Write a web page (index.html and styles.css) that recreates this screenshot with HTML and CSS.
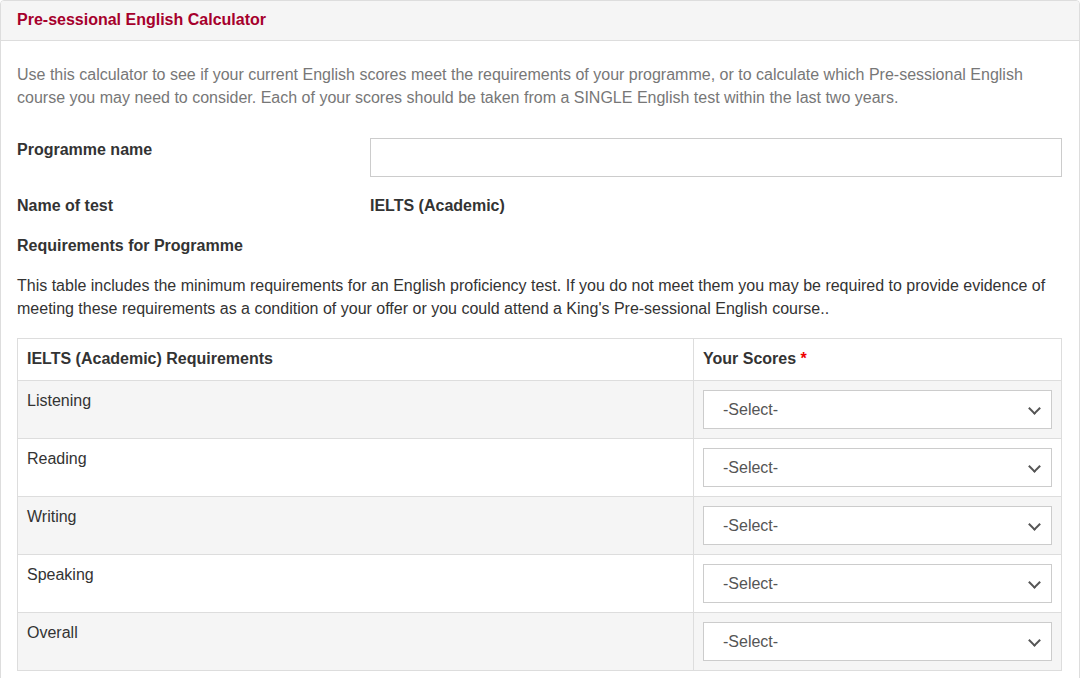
FILE: index.html
```html
<!DOCTYPE html>
<html lang="en">
<head>
<meta charset="utf-8">
<title>Pre-sessional English Calculator</title>
<link rel="stylesheet" href="styles.css">
</head>
<body>
<div class="panel">
  <div class="panel-heading">Pre-sessional English Calculator</div>
  <div class="panel-body">
    <p class="intro">Use this calculator to see if your current English scores meet the requirements of your programme, or to calculate which Pre-sessional English course you may need to consider. Each of your scores should be taken from a SINGLE English test within the last two years.</p>
    <div class="field-row field-input">
      <label class="field-label" for="prog">Programme name</label>
      <input class="text-input" id="prog" type="text">
    </div>
    <div class="field-row">
      <div class="field-label">Name of test</div>
      <div class="field-value">IELTS (Academic)</div>
    </div>
    <div class="field-row">
      <div class="field-label">Requirements for Programme</div>
    </div>
    <p class="note">This table includes the minimum requirements for an English proficiency test. If you do not meet them you may be required to provide evidence of meeting these requirements as a condition of your offer or you could attend a King's Pre-sessional English course..</p>
    <table class="req-table">
      <thead>
        <tr><th class="col-req">IELTS (Academic) Requirements</th><th>Your Scores <span class="req">*</span></th></tr>
      </thead>
      <tbody>
        <tr><td>Listening</td><td><div class="select-wrap"><select class="score"><option>-Select-</option></select></div></td></tr>
        <tr><td>Reading</td><td><div class="select-wrap"><select class="score"><option>-Select-</option></select></div></td></tr>
        <tr><td>Writing</td><td><div class="select-wrap"><select class="score"><option>-Select-</option></select></div></td></tr>
        <tr><td>Speaking</td><td><div class="select-wrap"><select class="score"><option>-Select-</option></select></div></td></tr>
        <tr><td>Overall</td><td><div class="select-wrap"><select class="score"><option>-Select-</option></select></div></td></tr>
      </tbody>
    </table>
  </div>
</div>
</body>
</html>
```

FILE: styles.css
```css
* { box-sizing: border-box; }
html, body { margin: 0; padding: 0; background: #fff; }
body {
  font-family: "Liberation Sans", Arial, sans-serif;
  font-size: 16px;
  line-height: 1.5;
  color: #333;
}
.panel {
  border: 1px solid #ddd;
  border-radius: 4px;
  width: 1080px;
  min-height: 700px;
}
.panel-heading {
  background: #f5f5f5;
  border-bottom: 1px solid #ddd;
  height: 40px;
  padding: 0 16px;
  line-height: 38px;
  font-weight: bold;
  color: #a6002c;
  font-size: 16px;
  border-radius: 3px 3px 0 0;
}
.panel-body {
  padding: 22px 17px 0 16px;
}
.intro, .note {
  margin: 0;
  line-height: 23px;
}
.intro { color: #777; font-size: 16px; }
.note { color: #333; font-size: 16px; margin-top: 17px; }
.field-row {
  display: flex;
  align-items: flex-start;
  margin-top: 17px;
}
.field-row.field-input { margin-top: 29px; }
.field-label {
  width: 353px;
  flex: none;
  font-weight: bold;
  line-height: 23px;
}
.field-value {
  font-weight: bold;
  line-height: 23px;
}
.text-input {
  flex: 1;
  height: 39px;
  border: 1px solid #ccc;
  border-radius: 0;
  font: inherit;
  padding: 6px 12px;
  background: #fff;
}
.req-table {
  width: 100%;
  border-collapse: collapse;
  margin-top: 18px;
  border: 1px solid #ddd;
}
.req-table th, .req-table td {
  border: 1px solid #ddd;
  padding: 9px 9px;
  text-align: left;
  vertical-align: top;
  line-height: 22px;
}
.req-table th {
  height: 42px;
  font-weight: bold;
  color: #333;
  background: #fff;
}
.col-req { width: 676px; }
.req { color: #e00; }
.req-table tbody tr:nth-child(odd) td { background: #f5f5f5; }
.req-table tbody tr:nth-child(even) td { background: #fff; }
.req-table tbody td { height: 58px; }
.select-wrap {
  position: relative;
}
.score {
  appearance: none;
  -webkit-appearance: none;
  width: 100%;
  height: 39px;
  border: 1px solid #ccc;
  border-radius: 0;
  background: #fff;
  font: inherit;
  color: #555;
  padding: 0 30px 0 19px;
  display: block;
}
.chev {
  display: none;
}
.select-wrap::after {
  content: "";
  position: absolute;
  right: 13px;
  top: 14px;
  width: 7px;
  height: 7px;
  border-right: 2px solid #555;
  border-bottom: 2px solid #555;
  transform: rotate(45deg);
  pointer-events: none;
}
```
